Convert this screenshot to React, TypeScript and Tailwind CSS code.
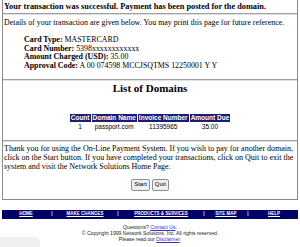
import React from 'react';

const serif = { fontFamily: '"Liberation Serif", "Times New Roman", serif' };
const sans = { fontFamily: '"Liberation Sans", Arial, sans-serif' };

const navLinks = [
  { label: 'HOME', w: 'w-[48px]' },
  { label: 'MAKE CHANGES', w: 'w-[62px]' },
  { label: 'PRODUCTS & SERVICES', w: 'w-[82px]' },
  { label: 'SITE MAP', w: 'w-[40px]' },
  { label: 'HELP', w: 'flex-1' },
];

function Rule({ className = '' }: { className?: string }) {
  return <div className={`h-[2px] border-t border-[#a0a0a0] border-b border-b-[#e0e0e0] ${className}`} />;
}

function App() {
  return (
    <div className="w-[300px] h-[247px] bg-white overflow-hidden relative" style={serif}>
      {/* Receipt box */}
      <div className="mx-[2px] -mt-px border border-[#8a8a8a] text-black">
        <div className="px-px pt-px text-[8.3px] leading-[11px] font-bold">
          Your transaction was successful. Payment has been posted for the domain.
        </div>
        <Rule className="mt-px" />

        <div className="px-px pt-[3px] text-[7.9px] leading-[10px]">
          Details of your transaction are given below. You may print this page for future reference.
        </div>

        <div className="pl-[21px] pt-[8px] text-[7.9px] leading-[8.7px]">
          <div><b>Card Type:</b> MASTERCARD</div>
          <div><b>Card Number:</b> 5398xxxxxxxxxxxx</div>
          <div><b>Amount Charged (USD):</b> 35.00</div>
          <div><b>Approval Code:</b> A 00 074598 MCCJSQTMS 12250001 Y Y</div>
        </div>

        <Rule className="mt-[8px]" />

        <h1 className="text-center font-bold text-[11px] leading-[14px]">List of Domains</h1>

        <div className="flex justify-center pt-[18px]">
          <table className="border-separate border-spacing-px text-[6.5px] leading-[8px]" style={sans}>
            <thead>
              <tr className="bg-[#1c1c72] text-white">
                <th className="px-px font-bold">Count</th>
                <th className="px-px font-bold">Domain Name</th>
                <th className="px-px font-bold">Invoice Number</th>
                <th className="px-px font-bold">Amount Due</th>
              </tr>
            </thead>
            <tbody>
              <tr className="text-center">
                <td>1</td>
                <td>passport.com</td>
                <td>11395965</td>
                <td>35.00</td>
              </tr>
            </tbody>
          </table>
        </div>

        <Rule className="mt-[8px]" />

        <div className="px-px pt-[2px] text-[8px] leading-[9px]">
          Thank you for using the On-Line Payment System. If you wish to pay for another domain,
          click on the Start button. If you have completed your transactions, click on Quit to exit the
          system and visit the Network Solutions Home Page.
        </div>

        <div className="flex justify-center gap-[2px] pt-[8px] pb-[8px]" style={sans}>
          <button className="h-[12px] px-[2px] text-[6px] bg-[#efefef] border border-[#8f8f8f] rounded-[2px]">Start</button>
          <button className="h-[12px] px-[2px] text-[6px] bg-[#efefef] border border-[#8f8f8f] rounded-[2px]">Quit</button>
        </div>
      </div>

      {/* Bottom navigation */}
      <div className="mx-[2px] mt-[10px] h-[9px] bg-[#000066] flex items-center text-white text-[4.5px] font-bold" style={sans}>
        {navLinks.map((l, i) => (
          <React.Fragment key={l.label}>
            {i > 0 && <span className="w-[4px] text-center">|</span>}
            <a className={`${l.w} text-center underline`}>{l.label}</a>
          </React.Fragment>
        ))}
      </div>

      {/* Footer */}
      <div className="pt-[5px] text-center text-[5.1px] leading-[6px] text-[#222]" style={sans}>
        <div>Questions? <a className="text-[#3333cc] underline">Contact Us</a>.</div>
        <div>© Copyright 1999 Network Solutions, Inc. All rights reserved.</div>
        <div>Please read our <a className="text-[#3333cc] underline">Disclaimer</a>.</div>
      </div>

      <div className="absolute left-0 bottom-0 w-[40px] h-[10px] bg-[#f0f0f0] rounded-tr-[4px]" />
    </div>
  );
}

export default App;
